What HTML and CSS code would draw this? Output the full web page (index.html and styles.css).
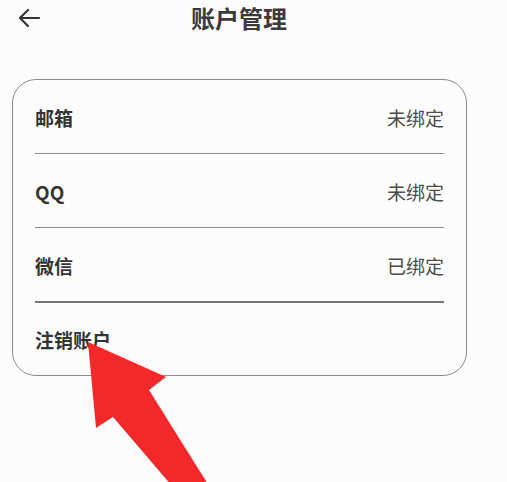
FILE: index.html
```html
<!DOCTYPE html>
<html lang="zh">
<head>
<meta charset="utf-8">
<title>账户管理</title>
<link rel="stylesheet" href="styles.css">
</head>
<body>
<div class="page">
  <header class="header">
    <svg class="back" viewBox="0 0 24 24" width="24" height="24" aria-hidden="true">
      <path d="M22 12H3M11 4L3 12L11 20" fill="none" stroke="#333" stroke-width="2.2" stroke-linecap="round" stroke-linejoin="round"/>
    </svg>
    <h1 class="title">账户管理</h1>
  </header>
  <section class="card">
    <div class="row"><span class="label">邮箱</span><span class="value">未绑定</span></div>
    <div class="row"><span class="label">QQ</span><span class="value">未绑定</span></div>
    <div class="row row-strong"><span class="label">微信</span><span class="value">已绑定</span></div>
    <div class="row row-last"><span class="label">注销账户</span></div>
  </section>
  <svg class="pointer" viewBox="0 0 507 482" width="507" height="482" aria-hidden="true">
    <polygon points="88,342 166,377 149,390 209,486 172,486 113,417 96,428" fill="#f42828"/>
  </svg>
</div>
</body>
</html>
```

FILE: styles.css
```css
html, body {
  margin: 0;
  padding: 0;
  background: #fdfcfd;
}

.page {
  position: relative;
  width: 507px;
  height: 482px;
  overflow: hidden;
  font-family: "Noto Sans CJK SC", "Noto Sans", sans-serif;
  color: #333;
}

.header {
  display: flex;
  align-items: center;
  height: 36px;
  padding-left: 17px;
}

.back {
  display: block;
  flex: none;
}

.title {
  margin: 0 0 0 150px;
  font-size: 24px;
  font-weight: 700;
  line-height: 36px;
  color: #3a3a3a;
}

.card {
  margin: 43px 0 0 12px;
  width: 455px;
  box-sizing: border-box;
  border: 1px solid #8c8a88;
  border-radius: 24px;
  padding: 0 22px;
}

.row {
  display: flex;
  justify-content: space-between;
  align-items: center;
  height: 74px;
  box-sizing: border-box;
  padding-top: 1px;
  border-bottom: 1px solid #8a8a8a;
}

.row-strong {
  height: 75px;
  border-bottom: 2px solid #7a7672;
}

.row-last {
  height: 72px;
  border-bottom: none;
}

.label {
  font-size: 19px;
  font-weight: 700;
  color: #333;
}

.value {
  font-size: 19px;
  font-weight: 400;
  color: #4c4c4c;
}

.pointer {
  position: absolute;
  left: 0;
  top: 0;
  pointer-events: none;
}
```
